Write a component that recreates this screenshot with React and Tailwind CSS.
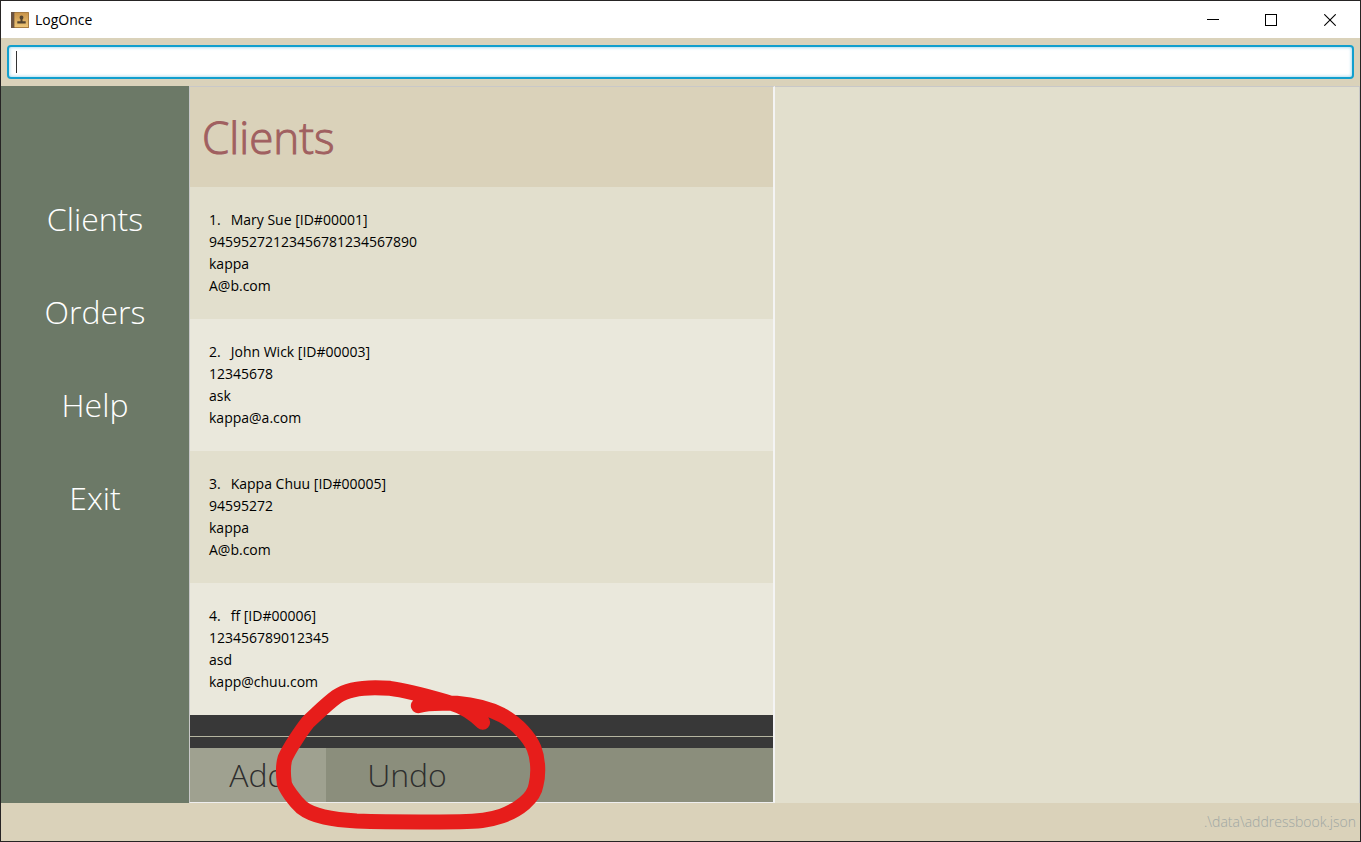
const clients = [
  { name: 'Mary Sue', id: '00001', phone: '94595272123456781234567890', address: 'kappa', email: 'A@b.com' },
  { name: 'John Wick', id: '00003', phone: '12345678', address: 'ask', email: 'kappa@a.com' },
  { name: 'Kappa Chuu', id: '00005', phone: '94595272', address: 'kappa', email: 'A@b.com' },
  { name: 'ff', id: '00006', phone: '123456789012345', address: 'asd', email: 'kapp@chuu.com' },
];

const menu = ['Clients', 'Orders', 'Help', 'Exit'];

function AppIcon() {
  return (
    <svg width="18" height="18" viewBox="0 0 18 18" aria-hidden="true">
      <defs>
        <linearGradient id="cover" x1="0" y1="0" x2="0" y2="1">
          <stop offset="0" stopColor="#c9944a" />
          <stop offset="1" stopColor="#edc577" />
        </linearGradient>
      </defs>
      <rect y="1" width="18" height="16" rx="0.5" fill="#a97d42" />
      <rect y="1" width="3.500" height="16" fill="#6b5442" />
      <rect x="3.500" y="2" width="13.500" height="14" fill="url(#cover)" />
      <path d="M10.500 4.500c1.300 0 1.900.8 1.900 1.900 0 .9-.5 1.500-.9 2v1.800h3.200v2.300H6.300v-2.300h3.200V8.400c-.4-.5-.9-1.100-.9-2 0-1.100.6-1.900 1.900-1.900z" fill="#54442f" />
    </svg>
  );
}

function TitleBar() {
  return (
    <header className="flex h-[37px] shrink-0 items-center justify-between bg-white pl-2.5">
      <div className="flex items-center gap-1.5">
        <AppIcon />
        <h1 className="text-sm text-black">LogOnce</h1>
      </div>
      <div className="flex h-full">
        <button type="button" aria-label="Minimize" className="flex w-[58px] items-center justify-center">
          <svg width="12" height="12" viewBox="0 0 12 12" fill="none" stroke="#000" shapeRendering="crispEdges">
            <path d="M0 5.500H12" />
          </svg>
        </button>
        <button type="button" aria-label="Maximize" className="flex w-[58px] items-center justify-center">
          <svg width="12" height="12" viewBox="0 0 12 12" fill="none" stroke="#000" shapeRendering="crispEdges">
            <rect x="0.5" y="0.5" width="11" height="11" />
          </svg>
        </button>
        <button type="button" aria-label="Close" className="flex w-[60px] items-center justify-center">
          <svg width="12" height="12" viewBox="0 0 12 12" fill="none" stroke="#000" strokeWidth="1.1">
            <path d="M0.300 0.300L11.700 11.700M11.700 0.300L0.300 11.700" />
          </svg>
        </button>
      </div>
    </header>
  );
}

function ClientCard({ index, client }) {
  return (
    <li className="px-[19px] py-[22px] text-sm leading-[22px] text-black odd:bg-[#e2dfcd] even:bg-[#eae8dc]">
      <p className="flex gap-2.5">
        <span>{index}.</span>
        <span>{client.name} [ID#{client.id}]</span>
      </p>
      <p>{client.phone}</p>
      <p>{client.address}</p>
      <p>{client.email}</p>
    </li>
  );
}

function RedCircle() {
  return (
    <svg
      className="pointer-events-none absolute -top-[78px] -left-[10px]"
      width="400"
      height="172"
      viewBox="0 0 1200 516"
      fill="none"
      stroke="#e71d1b"
      strokeWidth="45"
      strokeLinecap="round"
      strokeLinejoin="round"
      aria-hidden="true"
    >
      <path d="M715 107C745 96 790 100 830 100C875 104 925 115 965 135C1015 162 1050 205 1062 235C1074 265 1077 310 1068 345C1062 385 1015 420 965 438C925 452 890 454 840 455C740 456 620 456 530 453C460 449 400 440 365 412C345 394 316 355 313 340C309 310 309 285 315 265C328 235 365 180 385 155C410 132 440 102 470 80C510 52 570 50 630 55C690 62 760 84 815 100C850 110 880 130 908 157" />
    </svg>
  );
}

export default function App() {
  return (
    <div className="flex min-h-screen flex-col border border-[#262424] bg-[#dad2ba] font-['Open_Sans','Noto_Sans',sans-serif]">
      <TitleBar />
      <div className="relative px-1.5 py-[7px]">
        <input
          type="text"
          autoFocus
          aria-label="Command"
          className="block h-[34px] w-full rounded border-2 border-[#129fcd] bg-white px-[7px] text-lg caret-transparent inset-shadow-[0_0_3px_1px_#b5dff0] outline-none"
        />
        <span aria-hidden="true" className="absolute top-[13px] left-[15px] h-[22px] w-px bg-[#333333]" />
      </div>

      <div className="flex flex-1">
        <nav className="w-[188px] shrink-0 bg-[#6c7967] pt-[86px]">
          <ul>
            {menu.map((item) => (
              <li key={item}>
                <button type="button" className="h-[93px] w-full text-center text-[32px] font-light text-white">
                  {item}
                </button>
              </li>
            ))}
          </ul>
        </nav>

        <main className="flex min-w-0 flex-1 flex-col border border-r-2 border-[#c8c8c8] border-r-[#f4f4f4] border-b-[#eeeeee]">
          <h2 className="flex h-[100px] items-center px-3 text-[44px] font-light text-[#a06060] [-webkit-text-stroke:1px]">Clients</h2>
          <ul>
            {clients.map((client, i) => (
              <ClientCard key={client.id} index={i + 1} client={client} />
            ))}
          </ul>
          <div className="flex-1 border-b border-[#b5b5a0] bg-[#383838]" />
          <div className="h-[11px] bg-[#383838]" />
          <div className="relative flex h-[54px] bg-[#8b8e7c] text-[32px] font-light text-[#2e2e2e]">
            <button type="button" className="w-[136px] bg-[#9fa190]">Add</button>
            <button type="button" className="w-[162px]">Undo</button>
            <RedCircle />
          </div>
        </main>

        <section aria-label="Details" className="min-w-0 flex-1 border-t border-r border-[#c8c8c8] bg-[#e2dfcd] px-px" />
      </div>

      <footer className="flex h-[38px] shrink-0 items-center justify-end px-1 text-sm font-light text-[#a0a7a3]">
        .\data\addressbook.json
      </footer>
    </div>
  );
}
